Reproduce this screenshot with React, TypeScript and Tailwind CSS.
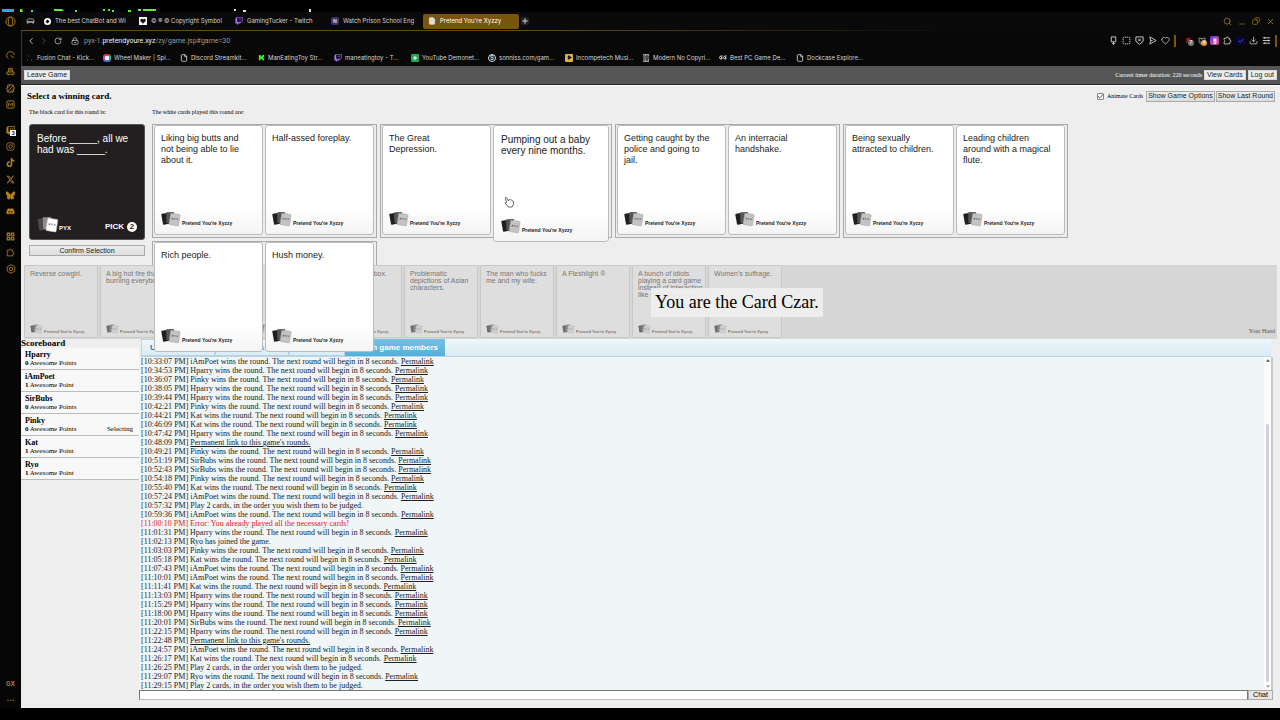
import React from "react";
import {
  Bookmark, Cat, Check, ChevronLeft, ChevronRight, CircleGauge, Download, File, Heart, LayoutGrid, LockKeyhole,
  Minus, Play, Plus, RotateCw, Search, SquareDashed, X, Copy, Bot, Flower2,
} from "lucide-react";
import { FaBluesky, FaDiscord, FaInstagram, FaTiktok, FaTwitch, FaXTwitter } from "react-icons/fa6";

const PERMALINK = "Permalink";

type Entry = { time: string; winner?: string; text?: string; link?: boolean; error?: boolean };

const log: Entry[] = [
  { time: "10:33:07", winner: "iAmPoet" },
  { time: "10:34:53", winner: "Hparry" },
  { time: "10:36:07", winner: "Pinky" },
  { time: "10:38:05", winner: "Hparry" },
  { time: "10:39:44", winner: "Hparry" },
  { time: "10:42:21", winner: "Pinky" },
  { time: "10:44:21", winner: "Kat" },
  { time: "10:46:09", winner: "Kat" },
  { time: "10:47:42", winner: "Hparry" },
  { time: "10:48:09", text: "Permanent link to this game's rounds.", link: true },
  { time: "10:49:21", winner: "Pinky" },
  { time: "10:51:19", winner: "SirBubs" },
  { time: "10:52:43", winner: "SirBubs" },
  { time: "10:54:18", winner: "Pinky" },
  { time: "10:55:40", winner: "Kat" },
  { time: "10:57:24", winner: "iAmPoet" },
  { time: "10:57:32", text: "Play 2 cards, in the order you wish them to be judged." },
  { time: "10:59:36", winner: "iAmPoet" },
  { time: "11:00:10", text: "Error: You already played all the necessary cards!", error: true },
  { time: "11:01:31", winner: "Hparry" },
  { time: "11:02:13", text: "Ryo has joined the game." },
  { time: "11:03:03", winner: "Pinky" },
  { time: "11:05:18", winner: "Kat" },
  { time: "11:07:43", winner: "iAmPoet" },
  { time: "11:10:01", winner: "iAmPoet" },
  { time: "11:11:41", winner: "Kat" },
  { time: "11:13:03", winner: "Hparry" },
  { time: "11:15:29", winner: "Hparry" },
  { time: "11:18:00", winner: "Hparry" },
  { time: "11:20:01", winner: "SirBubs" },
  { time: "11:22:15", winner: "Hparry" },
  { time: "11:22:48", text: "Permanent link to this game's rounds.", link: true },
  { time: "11:24:57", winner: "iAmPoet" },
  { time: "11:26:17", winner: "Kat" },
  { time: "11:26:25", text: "Play 2 cards, in the order you wish them to be judged." },
  { time: "11:29:07", winner: "Ryo" },
  { time: "11:29:15", text: "Play 2 cards, in the order you wish them to be judged." },
];

const scores = [
  { name: "Hparry", points: "0 Awesome Points" },
  { name: "iAmPoet", points: "1 Awesome Point" },
  { name: "SirBubs", points: "0 Awesome Points" },
  { name: "Pinky", points: "0 Awesome Points", status: "Selecting" },
  { name: "Kat", points: "1 Awesome Point" },
  { name: "Ryo", points: "1 Awesome Point" },
];

const played = [
  ["Liking big butts and not being able to lie about it.", "Half-assed foreplay."],
  ["The Great Depression.", "Pumping out a baby every nine months."],
  ["Getting caught by the police and going to jail.", "An interracial handshake."],
  ["Being sexually attracted to children.", "Leading children around with a magical flute."],
];

const hand = [
  "Reverse cowgirl.",
  "A big hot fire that's burning everybody.",
  "",
  "",
  "A cardboard box.",
  "Problematic depictions of Asian characters.",
  "The man who fucks me and my wife.",
  "A Fleshlight ®",
  "A bunch of idiots playing a card game instead of interacting like normal humans.",
  "Women's suffrage.",
];

function CardsLogo({ className, dark = false }: { className: string; dark?: boolean }) {
  return (
    <svg viewBox="0 0 38 30" className={className} aria-hidden="true">
      <rect x="2" y="4" width="15" height="21" rx="1.5" fill={dark ? "#4b494a" : "#1f1f1f"} transform="rotate(-10 9 14)" />
      <rect x="10" y="2" width="15" height="21" rx="1.5" fill={dark ? "#8d8b8c" : "#555"} transform="rotate(-2 17 12)" />
      <rect x="17" y="5" width="18" height="22" rx="1.5" fill={dark ? "#fff" : "#c3c3c3"} stroke={dark ? "#ccc" : "#a2a2a2"} strokeWidth="1" transform="rotate(9 26 15)" />
      <path d="M21 13.5v3M21 13.5h2v1.5h-2M25 13.5l1.200 1.500 1.200-1.500M26.200 15v2M29.500 14l2.500 3M32 14l-2.500 3" stroke="#444" strokeWidth=".9" fill="none" />
    </svg>
  );
}

function WhiteCard({ text, active = false }: { text: string; active?: boolean }) {
  return (
    <button
      type="button"
      className={
        active
          ? "relative z-10 flex h-[117px] w-[116px] shrink-0 flex-col justify-between rounded-[3px] border border-[#bbb] bg-white bg-linear-to-b from-white from-75% to-[#f4f4f4] pt-2 pr-1 pb-[7px] pl-[7px] text-left text-[10px] leading-[11px] text-[#222]"
          : "flex h-[110px] w-[109px] shrink-0 flex-col justify-between rounded-[3px] border border-[#bbb] bg-white bg-linear-to-b from-white from-75% to-[#f4f4f4] pt-[7px] pr-3 pb-[7px] pl-[6px] text-left text-[9px] leading-[11px] text-[#222]"
      }
    >
      <span>{text}</span>
      <span className="flex items-end gap-px">
        <CardsLogo className="h-4 w-5" />
        <span className="text-[5px] leading-[7px] font-bold whitespace-nowrap">Pretend You're Xyzzy</span>
      </span>
    </button>
  );
}

function PuzzleIcon() {
  return (
    <svg viewBox="0 0 24 24" className="size-[9px]" fill="none" stroke="currentColor" strokeWidth="2.200" strokeLinejoin="round">
      <path d="M3 6h5.500a3 3 0 0 1 6 0H18v5a3 3 0 0 1 0 6v4H3v-5a3.500 3.500 0 0 0 0-6z" />
    </svg>
  );
}

const tabs = [
  { label: "The best ChatBot and Wi", icon: <span className="grid size-[7px] place-items-center rounded-full bg-white"><span className="size-[3px] rotate-45 bg-black" /></span> },
  { label: "© ® © Copyright Symbol", icon: <span className="grid size-2 place-items-center bg-white"><Heart size={6} fill="#111" color="#111" /></span> },
  { label: "GamingTucker - Twitch", icon: <FaTwitch size={8} color="#a970ff" /> },
  { label: "Watch Prison School Eng", icon: <span className="grid size-2 place-items-center rounded-[2px] bg-[#3b3470] text-[5px] leading-none font-bold">N</span> },
];

const page = <File size={8} strokeWidth={2.500} />;
const bookmarks = [
  { label: "Fusion Chat - Kick...", icon: <svg viewBox="0 0 8 8" className="size-2"><path d="M1 6h1M2 2h1M5 6h1" stroke="#a44" /></svg> },
  { label: "Wheel Maker | Spi...", icon: <span className="grid size-2 place-items-center rounded-[3px] border-2 border-t-[#e34] border-r-[#3a7] border-b-[#37d] border-l-[#b4c] bg-white" /> },
  { label: "Discord Streamkit...", icon: page },
  { label: "ManEatingToy Str...", icon: <svg viewBox="0 0 8 8" className="size-[7px]"><path d="M1 1h2v2h1V2h1V1h2v2H6v2h1v2H5V6H4V5H3v2H1z" fill="#4dfc1a" /></svg> },
  { label: "maneatingtoy - T...", icon: <FaTwitch size={8} color="#a970ff" /> },
  { label: "YouTube Demonet...", icon: <span className="grid size-2 place-items-center rounded-[1px] bg-[#23a455]"><Plus size={6} strokeWidth={4} color="#fff" /></span> },
  { label: "sonniss.com/gam...", icon: <span className="grid size-2 place-items-center rounded-full border border-[#ddd] text-[6px] leading-none font-bold">S</span> },
  { label: "Incompetech Musi...", icon: <span className="grid size-2 place-items-center rounded-[1px] bg-[#e0b23a]"><Play size={5} fill="#111" color="#111" /></span> },
  { label: "Modern No Copyri...", icon: <svg viewBox="0 0 8 8" className="size-2"><path d="M1 0h6v8H1z" fill="#999" /><path d="M2 1v6M4 2h2v3H4zM4 6h2" stroke="#222" fill="none" /></svg> },
  {
    label: "Best PC Game De...",
    icon: (
      <svg viewBox="0 0 16 10" className="h-[5px] w-2" fill="none" stroke="#e5e5e5" strokeWidth="2">
        <path d="M7 2H3L1 5l2 3h3V5H4M15 2h-4L9 5l2 3h3V5h-2" />
      </svg>
    ),
  },
  { label: "Dockcase Explore...", icon: page },
];

function IconButton({ label, children, className = "" }: { label: string; children?: React.ReactNode; className?: string }) {
  return (
    <button type="button" aria-label={label} className={`grid shrink-0 place-items-center ${className}`}>
      {children}
    </button>
  );
}

function Sidebar() {
  return (
    <nav aria-label="Sidebar" className="flex w-[21px] shrink-0 flex-col items-center bg-[#060606] pt-1 text-[#b3801f]">
      <IconButton label="Opera menu" className="h-[11px]">
        <svg viewBox="0 0 12 12" className="size-[11px]" fill="none" stroke="currentColor">
          <circle cx="6" cy="6" r="5" />
          <ellipse cx="6" cy="6" rx="2.400" ry="4.500" />
        </svg>
      </IconButton>
      <div className="mt-5 flex flex-col items-center">
        <IconButton label="Speed limits" className="h-4">
          <svg viewBox="0 0 10 10" className="size-[9px]" fill="none" stroke="currentColor"><path d="M2.500 8.500A4.300 4.300 0 1 1 9.300 4.500M9 7.500 5 5" /></svg>
        </IconButton>
        <IconButton label="Assistant" className="h-[17px]">
          <svg viewBox="0 0 10 10" className="size-[9px]" fill="none" stroke="currentColor"><path d="M3 5.500V1.500h4v4M3 3.500h4M1 5.500h8v2.500H1zM2.500 8v1.500M7.500 8v1.500" /></svg>
        </IconButton>
        <IconButton label="Mods" className="h-4">
          <svg viewBox="0 0 10 10" className="size-[9px]" fill="none" stroke="currentColor"><path d="M2 1h6l1 3-1 5H2L1 6zM2 8l6-6M1 5l4-4M5 9l4-4" /></svg>
        </IconButton>
        <IconButton label="Music" className="h-4">
          <svg viewBox="0 0 10 10" className="size-[9px]" fill="none" stroke="currentColor"><rect x="1" y="1" width="8" height="8" rx="1" /><path d="M3 7V3.500L5 5.500l2-2V7" /></svg>
        </IconButton>
      </div>
      <div className="mt-[10px] flex flex-col items-center">
        <IconButton label="Twitch" className="relative h-4">
          <FaTwitch size={9} />
          <span className="absolute top-2 left-1 grid size-[6px] place-items-center bg-white font-[Inter,sans-serif] text-[5px] leading-none font-bold text-black">3</span>
        </IconButton>
        <IconButton label="Instagram" className="h-4"><FaInstagram size={9} /></IconButton>
        <IconButton label="TikTok" className="h-[17px]"><FaTiktok size={9} /></IconButton>
        <IconButton label="X" className="h-4"><FaXTwitter size={9} /></IconButton>
        <IconButton label="Bluesky" className="h-4"><FaBluesky size={9} /></IconButton>
        <IconButton label="Discord" className="h-[17px]"><FaDiscord size={9} /></IconButton>
      </div>
      <div className="mt-2 flex flex-col items-center">
        <IconButton label="Workspaces" className="h-4"><LayoutGrid size={9} strokeWidth={3} /></IconButton>
        <IconButton label="Extensions" className="h-4"><PuzzleIcon /></IconButton>
        <IconButton label="Settings" className="h-[17px]">
          <svg viewBox="0 0 12 12" className="size-[10px]" fill="none" stroke="currentColor"><path d="M6 .8l4.500 2.600v5.200L6 11.200 1.500 8.600V3.400z" /><circle cx="6" cy="6" r="2" /></svg>
        </IconButton>
      </div>
      <button type="button" className="mt-auto font-[Inter,sans-serif] text-[6px] leading-2 font-bold">GX</button>
      <button type="button" aria-label="More" className="mt-2 mb-1 font-[Inter,sans-serif] text-[8px] leading-2 font-bold">···</button>
    </nav>
  );
}

function BrowserBar() {
  return (
    <header className="font-[Inter,Roboto,sans-serif] text-[6px] leading-2 text-[#d5d5d5]">
      <div className="flex h-[18px] items-center bg-[#0a0a0a]">
        <IconButton label="Tab islands" className="w-[18px]">
          <svg viewBox="0 0 10 8" className="h-[7px] w-[9px]" fill="none" stroke="#aaa"><path d="M1 5V3q0-2 2-2h4q2 0 2 2v2zM2 7V5M8 7V5M1 4h8" /></svg>
        </IconButton>
        {tabs.map((t) => (
          <a key={t.label} href="#tab" className="flex w-24 items-center gap-1 overflow-hidden pl-1 whitespace-nowrap">
            <span className="grid w-2 shrink-0 place-items-center">{t.icon}</span>
            <span className="overflow-hidden">{t.label}</span>
          </a>
        ))}
        <a href="#game=30" aria-current="page" className="flex h-[15px] w-24 items-center gap-1 rounded-[2px] bg-[#7a530c] pl-[5px] whitespace-nowrap text-white">
          <File size={8} fill="#ddd" color="#ddd" />
          Pretend You're Xyzzy
        </a>
        <IconButton label="New tab" className="ml-[2px] size-2 rounded-[2px] bg-[#222]"><Plus size={8} strokeWidth={3} /></IconButton>
        <div className="ml-auto flex items-center gap-[6px] pr-[5px] text-[#b3801f]">
          <IconButton label="Search tabs"><Search size={9} /></IconButton>
          <IconButton label="Minimize" className="pt-[5px]"><Minus size={8} /></IconButton>
          <IconButton label="Restore"><Copy size={8} className="-scale-x-100" /></IconButton>
          <IconButton label="Close"><X size={9} /></IconButton>
        </div>
      </div>
      <div className="h-px bg-linear-to-r from-[#6b4a10] from-40% to-[#0a0a0a] to-75%" />
      <div className="border-l border-[#4b340d] bg-[#080808]">
        <div className="flex h-[19px] items-center pr-[3px] pl-1">
          <IconButton label="Back" className="w-[10px]"><ChevronLeft size={10} /></IconButton>
          <IconButton label="Forward" className="ml-[3px] w-[10px] text-[#555]"><ChevronRight size={10} /></IconButton>
          <IconButton label="Reload" className="ml-1 w-[10px]"><RotateCw size={8} /></IconButton>
          <LockKeyhole size={8} className="ml-2" />
          <a href="#game=30" className="ml-[5px] font-[Roboto,sans-serif] text-[7px] text-[#999]">
            pyx-1.<span className="text-[#eee]">pretendyoure.xyz</span>/zy/game.jsp#game=30
          </a>
          <div className="ml-auto flex items-center gap-1">
            <IconButton label="Pin">
              <svg viewBox="0 0 10 10" className="size-[9px]" fill="none" stroke="currentColor"><path d="M2.500 1h5v5.500h-5zM5 6.500V9.500M3.500 8 5 9.500 6.500 8" /></svg>
            </IconButton>
            <IconButton label="Snapshot"><SquareDashed size={9} strokeWidth={2.500} /></IconButton>
            <IconButton label="Ad blocker">
              <svg viewBox="0 0 10 10" className="size-[9px]" fill="none" stroke="currentColor"><path d="M1 1h8v5L5 9.300 1 6zM3.500 3l3 3M6.500 3l-3 3" /></svg>
            </IconButton>
            <IconButton label="Send">
              <svg viewBox="0 0 10 10" className="size-[9px]" fill="none" stroke="currentColor"><path d="M2 1l7 4-7 4 1-4zM3 5h2" /></svg>
            </IconButton>
            <IconButton label="Favorites"><Heart size={9} /></IconButton>
            <span className="mr-1 h-3 w-[2px] bg-[#7a530c]" />
            <IconButton label="Extension alerts" className="relative h-2 w-[9px]">
              <Bookmark size={7} fill="#8d1d22" color="#8d1d22" />
              <span className="absolute top-[3px] left-1 grid size-[6px] place-items-center rounded-full bg-[#777] text-[5px] leading-none text-white">7</span>
            </IconButton>
            <IconButton label="Cat extension" className="relative h-2 w-[9px]">
              <Cat size={8} />
              <span className="absolute top-[3px] left-1 grid size-[6px] place-items-center rounded-full bg-[#f0972c] text-[5px] leading-none text-white">4</span>
            </IconButton>
            <IconButton label="Photo extension" className="size-[9px] rounded-[2px] bg-linear-to-br from-[#6a2cf0] to-[#f02c78]"><Flower2 size={6} color="#fff" /></IconButton>
            <IconButton label="Extensions"><PuzzleIcon /></IconButton>
            <IconButton label="Checker" className="size-[9px] bg-[#070738] text-[#5a7cff]"><Check size={6} strokeWidth={3} /></IconButton>
            <IconButton label="Downloads"><Download size={9} /></IconButton>
            <IconButton label="Menu">
              <svg viewBox="0 0 10 10" className="size-[9px]" fill="none" stroke="currentColor"><path d="M1 2h8M1 5h8M1 8h8M3 1v2M7 4v2M3 7v2" /></svg>
            </IconButton>
            <span className="h-3 w-[2px] bg-[#7a530c]" />
          </div>
        </div>
        <div className="flex h-4 items-center pb-px pl-1">
          {bookmarks.map((b) => (
            <a key={b.label} href="#bookmark" className="flex w-[77px] shrink-0 items-center gap-[3px] whitespace-nowrap">
              <span className="grid w-2 shrink-0 place-items-center">{b.icon}</span>
              {b.label}
            </a>
          ))}
        </div>
      </div>
    </header>
  );
}

const plainButton =
  "h-[10px] border border-[#d8d8d8] bg-[#eee] px-[2px] font-[Liberation_Sans,sans-serif] text-[7px] leading-2 whitespace-nowrap text-[#222]";
const grayButton =
  "block h-[11px] border border-[#aaa] bg-linear-to-b from-[#eee] to-[#dcdcdc] px-px font-[Liberation_Sans,sans-serif] text-[7px] leading-2 whitespace-nowrap text-[#222]";

function GameArea() {
  return (
    <section className="relative z-10 h-[179px]">
      <div className="flex h-5 items-center pr-[5px] pl-[6px]">
        <h1 className="text-[9px] leading-3 font-bold">Select a winning card.</h1>
        <div className="ml-auto flex items-center">
          <label className="relative mr-[3px] flex items-center gap-[3px] text-[6px] leading-2">
            <input type="checkbox" defaultChecked className="peer size-[7px] appearance-none rounded-[1px] border border-[#888] bg-white" />
            <Check size={7} strokeWidth={3} color="#333" className="pointer-events-none absolute top-px left-0 hidden peer-checked:block" />
            Animate Cards
          </label>
          <button type="button" className={grayButton}>Show Game Options</button>
          <button type="button" className={`ml-px ${grayButton}`}>Show Last Round</button>
        </div>
      </div>
      <div className="flex gap-[7px] pl-2">
        <div className="w-[116px] shrink-0">
          <p className="mb-[6px] h-3 text-[6px] leading-3">The black card for this round is:</p>
          <div className="flex h-[116px] flex-col justify-between rounded-[3px] border border-[#555] bg-[#231f20] px-[7px] pt-2 pb-[6px] font-[Liberation_Sans,sans-serif] text-[10px] leading-[11px] text-white">
            <p>
              Before _____, all we
              <br />
              had was _____.
            </p>
            <div className="flex items-end">
              <CardsLogo className="h-[17px] w-[22px]" dark />
              <span className="pb-px text-[6px] leading-2 font-bold">PYX</span>
              <span className="ml-auto flex items-center gap-[3px] pb-px text-[8px] leading-[10px] font-bold">
                PICK
                <span className="grid size-[10px] place-items-center rounded-full bg-white text-[#231f20]">2</span>
              </span>
            </div>
          </div>
          <button type="button" className={`mt-[5px] w-full ${grayButton}`}>Confirm Selection</button>
        </div>
        <div className="min-w-0 flex-1">
          <p className="mb-[6px] h-3 text-[6px] leading-3">The white cards played this round are:</p>
          <div className="flex flex-wrap gap-[3px] font-[Liberation_Sans,sans-serif]">
            {played.map(([first, second], i) => (
              <div key={first} className="flex h-[114px] gap-[2px] border border-[#aaa] bg-[#ececec] pr-[2px] pl-px">
                <WhiteCard text={first} />
                <WhiteCard text={second} active={i === 1} />
              </div>
            ))}
            <div className="flex h-6 gap-[2px] border border-b-0 border-[#aaa] pr-[2px] pl-px">
              <WhiteCard text="Rich people." />
              <WhiteCard text="Hush money." />
            </div>
          </div>
        </div>
      </div>
      <svg viewBox="0 0 16 18" className="absolute top-[110px] left-[483px] z-20 h-3 w-[10px]" aria-hidden="true">
        <path d="M4 9 2 3q0-2 2-1l3 5 1-2 2 1 1-1 2 2 2 1v5l-2 4H7L2 11q0-2 2-1z" fill="#fff" stroke="#333" strokeWidth="1.200" />
      </svg>
    </section>
  );
}

function Hand() {
  return (
    <section className="relative mr-[3px] ml-[3px] flex h-[74px] bg-[#d6d6d6] font-[Liberation_Sans,sans-serif]">
      <div className="flex gap-[2px]">
        {hand.map((text, i) => (
          <article
            key={i}
            className="flex h-[73px] w-[74px] flex-col justify-between overflow-hidden rounded-[2px] border border-[#c8c8c8] bg-[#dedede] pt-1 pr-px pb-[3px] pl-[5px] text-[7px] leading-[7px] text-[#777]"
          >
            <p className="h-7 overflow-hidden">{text}</p>
            <div className="flex items-end gap-px">
              <CardsLogo className="h-[10px] w-[13px] opacity-60" />
              <span className="text-[4px] leading-[5px] font-bold whitespace-nowrap">Pretend You're Xyzzy</span>
            </div>
          </article>
        ))}
      </div>
      <p className="mt-auto ml-auto pr-[2px] pb-1 font-[Liberation_Serif,serif] text-[6px] leading-2 text-[#555]">Your Hand</p>
      <p className="absolute top-[23px] left-[627px] bg-[#eee]/95 px-1 font-[Liberation_Serif,serif] text-[18px] leading-[29px] whitespace-nowrap text-black">
        You are the Card Czar.
      </p>
    </section>
  );
}

function Scoreboard() {
  return (
    <aside className="w-[118px] shrink-0">
      <h2 className="h-[9px] text-[9px] leading-2 font-bold">Scoreboard</h2>
      <ul>
        {scores.map((s) => (
          <li key={s.name} className="h-[22px] border-b border-[#bbb] bg-[#f8f8f8] pt-[2px] pr-[6px] pl-1 text-[7px] leading-[9px]">
            <p className="text-[8px] font-bold">{s.name}</p>
            <p className="flex justify-between">
              <span>
                <b>{s.points[0]}</b>
                {s.points.slice(1)}
              </span>
              {s.status && <span>{s.status}</span>}
            </p>
          </li>
        ))}
      </ul>
    </aside>
  );
}

function Chat() {
  return (
    <section className="mr-[7px] flex min-w-0 flex-1 flex-col">
      <div role="tablist" className="mr-[2px] ml-[2px] flex h-[18px] border-b border-[#b8d4e4] bg-linear-to-b from-[#eff7fb] to-[#d9ebf5] font-[Liberation_Sans,sans-serif] text-[8px] leading-4 font-bold text-[#2779aa]">
        <button type="button" role="tab" aria-selected="false" className="w-[74px] border border-[#b8d4e4] pl-2 text-left">User info</button>
        <button type="button" role="tab" aria-selected="false" className="w-[74px] border border-[#b8d4e4] px-2">Filters</button>
        <button type="button" role="tab" aria-selected="false" className="w-14 border border-[#b8d4e4] px-2">Global</button>
        <button type="button" role="tab" aria-selected="true" className="flex w-[100px] items-center justify-end overflow-hidden bg-linear-to-b from-[#74c0e2] to-[#52b0dc] pr-[7px] whitespace-nowrap text-white">
          Chat with game members
        </button>
      </div>
      <div className="flex border-r-2 border-[#c9c9c9] bg-[#f0f6f7]">
        <ol className="flex-1 pl-[2px] text-[8px] leading-[9px] text-[#222]">
          {log.map((e) => (
            <li key={e.time} className={e.error ? "text-[#e01818]" : ""}>
              [{e.time} PM]{" "}
              {e.winner ? (
                <>
                  {e.winner} wins the round. The next round will begin in 8 seconds. <a href="#round" className="underline">{PERMALINK}</a>
                </>
              ) : e.link ? (
                <a href="#rounds" className="underline">{e.text}</a>
              ) : (
                e.text
              )}
            </li>
          ))}
        </ol>
        <div className="flex w-[7px] flex-col items-center bg-[#fcfcfc] py-[2px]" aria-hidden="true">
          <svg viewBox="0 0 6 4" className="h-[3px] w-1"><path d="M0 4 3 0l3 4z" fill="#555" /></svg>
          <span className="mt-[62px] mb-[3px] w-[3px] flex-1 rounded-full bg-[#cfd3da]" />
          <svg viewBox="0 0 6 4" className="h-[3px] w-1"><path d="M0 0l3 4 3-4z" fill="#999" /></svg>
        </div>
      </div>
      <form className="flex" onSubmit={(e) => e.preventDefault()}>
        <input aria-label="Chat message" className="h-[10px] min-w-0 flex-1 border border-[#777] border-b-[#bbb] bg-white px-1 text-[8px] leading-2 outline-none" />
        <button type="submit" className="h-[10px] w-[25px] border border-[#aaa] bg-[#e6e6e6] font-[Liberation_Sans,sans-serif] text-[7px] leading-2">Chat</button>
      </form>
    </section>
  );
}

export default function App() {
  return (
    <div className="flex min-h-screen flex-col bg-black font-[Liberation_Serif,serif] text-black">
      <div className="flex h-3 items-end">
        <svg viewBox="0 0 320 3" className="h-[3px] w-80" aria-hidden="true">
          <path d="M2 0h12v3H2z" fill="#3ba3d8" />
          <path d="M20 0h2l1 3h-3zM31 1h2v2h-2zM54 0h8l2 2h-10zM75 1h2v2h-2zM103 0h2v2h-2zM108 0h2v2h-2zM112 1h2v2h-2zM128 1h3v2h-3zM138 0h3v2h-3zM143 0h13v2h-13z" fill="#5cf02c" />
          <path d="M234 0h2v2h-2zM243 1h3v2h-3zM309 0h2v3h-2z" fill="#ddd" />
        </svg>
      </div>
      <div className="flex flex-1">
        <Sidebar />
        <main className="flex min-w-0 flex-1 flex-col bg-[#eee]">
          <BrowserBar />
          <div className="flex h-5 items-center border-b border-[#fff] bg-[#555] pr-[3px] pb-px pl-[3px] shadow-[inset_0_-1px_0_#222]">
            <button type="button" className={plainButton}>Leave Game</button>
            <span className="mr-[2px] ml-auto text-[6px] leading-2 text-white">Current timer duration: 220 seconds</span>
            <button type="button" className={plainButton}>View Cards</button>
            <button type="button" className={`ml-[2px] ${plainButton}`}>Log out</button>
          </div>
          <GameArea />
          <Hand />
          <div className="flex">
            <Scoreboard />
            <Chat />
          </div>
        </main>
      </div>
      <div className="h-3 shrink-0" />
    </div>
  );
}
